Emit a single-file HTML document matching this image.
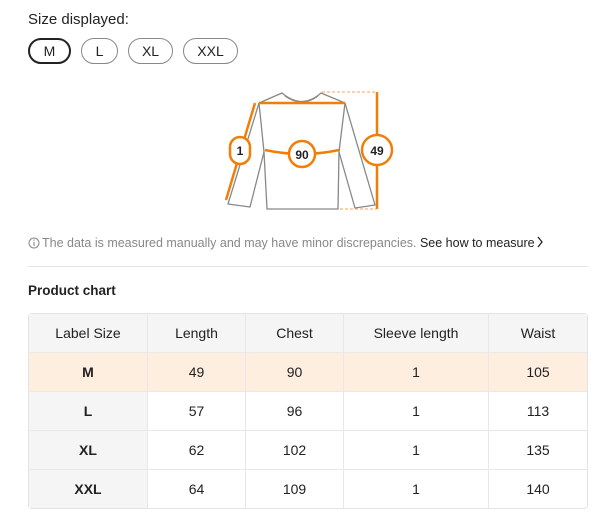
<!DOCTYPE html>
<html><head><meta charset="utf-8"><style>
body{margin:0;background:#fff;font-family:"Liberation Sans",sans-serif;color:#222;width:600px;height:526px;position:relative;overflow:hidden}
.a{position:absolute}
.btn{position:absolute;top:38px;height:26px;border:1px solid #888;border-radius:14px;box-sizing:border-box;font-size:14px;line-height:24px;text-align:center;color:#222}
table{position:absolute;left:28px;top:313px;width:560px;border-collapse:separate;border-spacing:0;border:1px solid #e3e3e3;border-radius:4px;font-size:14px}
td{height:38px;text-align:center;border-right:1px solid #e8e8e8;border-bottom:1px solid #e8e8e8;padding:0}
tr td:last-child{border-right:none}
tr:last-child td{border-bottom:none}
td.h{background:#f5f5f5}
tr.sel td{background:#fdeee0}
td.b{font-weight:bold;background:#f5f5f5}
tr.sel td.b{background:#fdeee0}
</style></head><body>
<div class="a" style="left:28px;top:11px;font-size:15px;color:#222">Size displayed:</div>
<div class="btn" style="left:28px;width:43px;border:2px solid #222;line-height:22px">M</div>
<div class="btn" style="left:81px;width:37px">L</div>
<div class="btn" style="left:128px;width:45px">XL</div>
<div class="btn" style="left:183px;width:55px">XXL</div>
<svg class="a" style="left:0;top:0" width="600" height="260">
<g fill="none" stroke="#888" stroke-width="1.3" stroke-linejoin="round">
<path d="M259 103 L282 93 Q302 110 321 93 L345 103"/>
<path d="M285 96 Q302 108 318 96"/>
<path d="M259 103 L264 152 L267 209 L338 209 L339 152 L345 103"/>
<path d="M259 103 L228 204 L250 207 L264 152"/>
<path d="M345 103 L375 205 L355 208 L339 152"/>
</g>
<g stroke="#f07f0a" stroke-width="2.5" fill="none">
<path d="M259 103 L345 103"/>
<path d="M255 103 L226 200"/>
<path d="M265 150 Q302 158 339 150"/>
<path d="M377 92 L377 209"/>
</g>
<g stroke="#f5a55a" stroke-width="1" stroke-dasharray="3,2"><path d="M322 92 L377 92 M340 209 L377 209"/></g>
<rect x="230" y="137" width="20" height="27" rx="10" fill="#fff" stroke="#f07f0a" stroke-width="2.5"/>
<circle cx="302" cy="154" r="13" fill="#fff" stroke="#f07f0a" stroke-width="2.5"/>
<circle cx="377" cy="150" r="15" fill="#fff" stroke="#f07f0a" stroke-width="2.5"/>
<g font-family="Liberation Sans" font-size="12" font-weight="bold" fill="#222" text-anchor="middle">
<text x="240" y="155">1</text><text x="302" y="159">90</text><text x="377" y="155">49</text></g>
<circle cx="34" cy="243" r="5" fill="none" stroke="#888" stroke-width="1"/>
<path d="M34 242v4M34 239.5v1.2" stroke="#888" stroke-width="1.1"/>
<path d="M538 237l4 5-4 5" fill="none" stroke="#222" stroke-width="1.3"/>
</svg>
<div class="a" style="left:42px;top:236px;font-size:12.5px;color:#888;white-space:nowrap">The data is measured manually and may have minor discrepancies. <span style="color:#222">See how to measure</span></div>
<div class="a" style="left:28px;top:266px;width:560px;height:1px;background:#e6e6e6"></div>
<div class="a" style="left:28px;top:283px;font-size:13.5px;font-weight:bold;color:#222">Product chart</div>
<table>
<colgroup><col style="width:119px"><col style="width:98px"><col style="width:98px"><col style="width:145px"><col></colgroup>
<tr><td class="h">Label Size</td><td class="h">Length</td><td class="h">Chest</td><td class="h">Sleeve length</td><td class="h">Waist</td></tr>
<tr class="sel"><td class="b">M</td><td>49</td><td>90</td><td>1</td><td>105</td></tr>
<tr><td class="b">L</td><td>57</td><td>96</td><td>1</td><td>113</td></tr>
<tr><td class="b">XL</td><td>62</td><td>102</td><td>1</td><td>135</td></tr>
<tr><td class="b">XXL</td><td>64</td><td>109</td><td>1</td><td>140</td></tr>
</table>
</body></html>
